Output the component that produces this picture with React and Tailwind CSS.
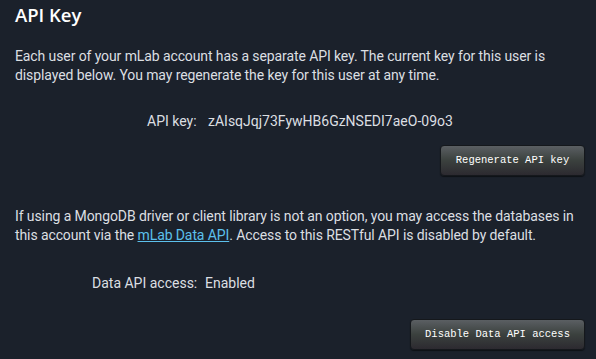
export default function App() {
  return (
    <div className="w-[596px] h-[359px] overflow-hidden bg-[#1b212b] text-[#dcdfe2] font-['Roboto',sans-serif]">
      <div className="px-[15px] pt-[1px]">
        <h2 className="text-[18.5px] leading-[28px] font-semibold text-white font-['Open_Sans',sans-serif]">API Key</h2>

        <p className="mt-[18px] text-[14px] leading-[19px] tracking-[-0.1px]">
          Each user of your mLab account has a separate API key. The current key for this user is displayed below. You may regenerate the key for this user at any time.
        </p>

        {/* key row */}
        <div className="mt-[27px] flex text-[14px] leading-[19px] pl-[132px] whitespace-nowrap">
          <span className="w-[61px] shrink-0">API key:</span>
          <span>zAIsqJqj73FywHB6GzNSEDI7aeO-09o3</span>
        </div>

        <div className="mt-[14px] flex justify-end">
          <button className="w-[145px] h-[31px] mr-[-4px] rounded-[4px] border border-[#15181c] bg-gradient-to-b from-[#5b5f63] via-[#3b413e] to-[#2c2a30] text-white text-[10.5px] font-['Liberation_Mono',monospace] shadow-[0_1px_1px_rgba(0,0,0,0.5)]">
            Regenerate API key
          </button>
        </div>

        <p className="mt-[31px] text-[14px] leading-[19px] tracking-[-0.1px]">
          If using a MongoDB driver or client library is not an option, you may access the databases in this account via the{' '}
          <a href="#" className="text-[#5cc0ec] underline">mLab Data API</a>. Access to this RESTful API is disabled by default.
        </p>

        <div className="mt-[29px] flex text-[14px] leading-[19px] pl-[77px] whitespace-nowrap">
          <span className="w-[113px] shrink-0">Data API access:</span>
          <span>Enabled</span>
        </div>

        <div className="mt-[26px] flex justify-end">
          <button className="w-[175px] h-[31px] mr-[-4px] rounded-[4px] border border-[#15181c] bg-gradient-to-b from-[#5b5f63] via-[#3b413e] to-[#2c2a30] text-white text-[10.5px] font-['Liberation_Mono',monospace] shadow-[0_1px_1px_rgba(0,0,0,0.5)]">
            Disable Data API access
          </button>
        </div>
      </div>
    </div>
  );
}
